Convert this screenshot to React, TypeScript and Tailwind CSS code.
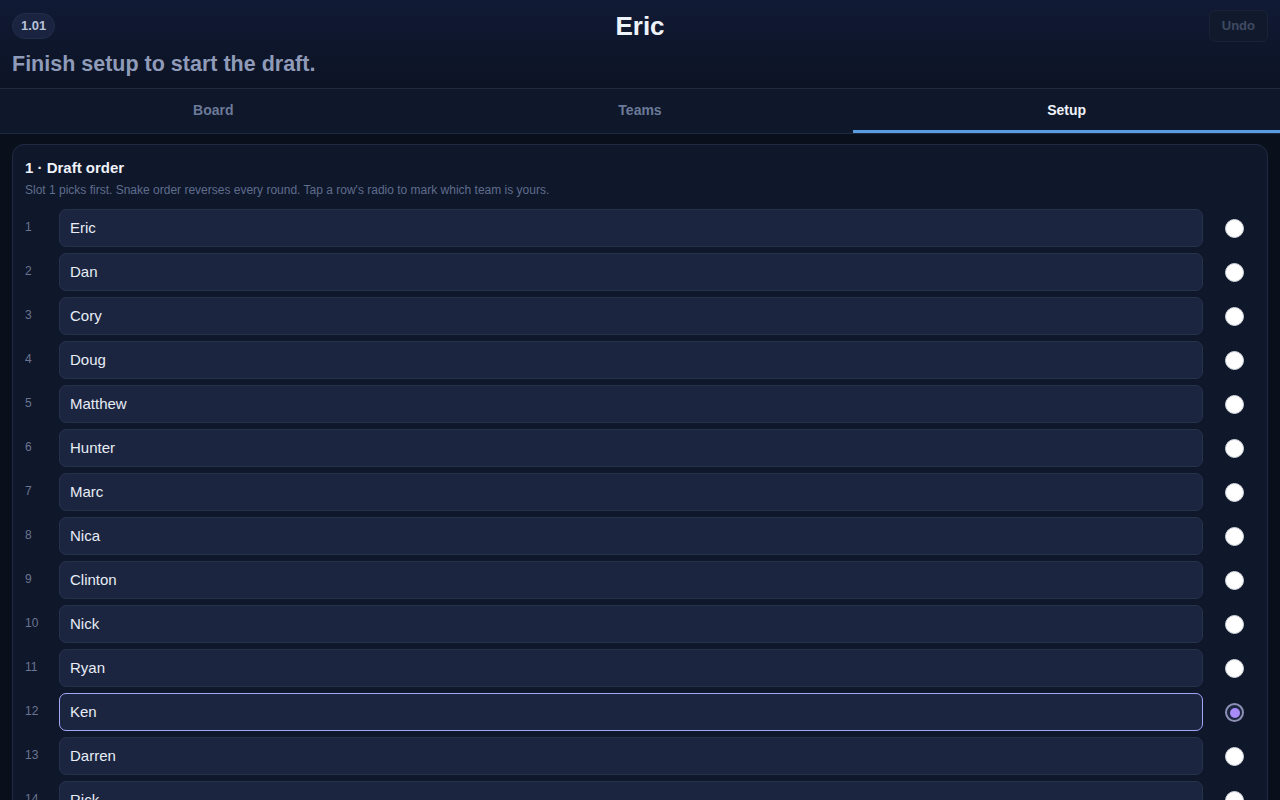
import { useState } from "react";

const teams = [
  "Eric",
  "Dan",
  "Cory",
  "Doug",
  "Matthew",
  "Hunter",
  "Marc",
  "Nica",
  "Clinton",
  "Nick",
  "Ryan",
  "Ken",
  "Darren",
  "Rick",
  "Steve",
  "Mike",
];

const tabs = ["Board", "Teams", "Setup"];

export default function App() {
  const [names, setNames] = useState(teams);
  const [mine, setMine] = useState(11);
  const [tab, setTab] = useState("Setup");

  return (
    <div
      className="min-h-screen bg-[#0a0f1c] text-[#e2e8f0]"
      style={{ fontFamily: '"Liberation Sans", Arial, sans-serif' }}
    >
      <header className="bg-gradient-to-b from-[#111a35] to-[#0c1324] px-3 pt-[10px] pb-[10px] border-b border-[#1f2a40]">
        <div className="relative flex h-8 items-center justify-between">
          <span className="rounded-full bg-[#1a2440] border border-[#222d48] px-2 py-[5px] text-[13px] font-bold leading-[14px] text-[#b8c2d8]">
            1.01
          </span>
          <h1 className="absolute left-1/2 -translate-x-1/2 text-[26px] font-bold text-[#eef2f9]">
            Eric
          </h1>
          <button
            disabled
            className="h-8 rounded-md border border-[#1a2236] bg-[#111a2d] px-3 text-[13px] font-bold text-[#3f4a63]"
          >
            Undo
          </button>
        </div>
        <p className="mt-2 text-[21.5px] font-bold leading-[28px] text-[#8f9bb8]">
          Finish setup to start the draft.
        </p>
      </header>

      <nav className="grid grid-cols-3 bg-[#0f172a] border-b border-[#1f2a40]">
        {tabs.map((t) => (
          <button
            key={t}
            onClick={() => setTab(t)}
            className={`h-[44px] border-b-[3px] pt-[1px] text-[14px] font-bold ${
              tab === t
                ? "border-[#5b9be0] text-[#eef2f9]"
                : "border-transparent text-[#6c7a99]"
            }`}
          >
            {t}
          </button>
        ))}
      </nav>

      <main className="px-3 pt-[10px]">
        <section className="rounded-xl border border-[#1f2a42] bg-[#0f172b] p-3">
          <h2 className="mt-[1px] text-[15px] font-bold leading-5 text-[#eef2f9]">
            1 · Draft order
          </h2>
          <p className="mt-1 text-[12px] leading-4 text-[#5f6d8c]">
            Slot 1 picks first. Snake order reverses every round. Tap a row's
            radio to mark which team is yours.
          </p>

          <div className="mt-[11px] flex flex-col gap-[6px]">
            {names.map((name, i) => (
              <div key={i} className="flex items-center">
                <span className="w-[34px] -mt-[2px] text-[12px] text-[#6a7591]">
                  {i + 1}
                </span>
                <input
                  value={name}
                  onChange={(e) => {
                    const next = [...names];
                    next[i] = e.target.value;
                    setNames(next);
                  }}
                  className={`h-[38px] flex-1 rounded-[7px] border bg-[#1b2540] px-[10px] pb-[1px] text-[15px] text-[#e8edf5] outline-none ${
                    mine === i ? "border-[#a5a6f6]" : "border-[#27314b]"
                  }`}
                />
                <div className="flex w-[52px] justify-end pr-[11px] pt-[1px]">
                  <button
                    onClick={() => setMine(i)}
                    className={`flex h-[19px] w-[19px] items-center justify-center rounded-full ${
                      mine === i
                        ? "border-2 border-[#8e8fb4] bg-[#1b2540]"
                        : "bg-white border border-[#d0d4dc]"
                    }`}
                  >
                    {mine === i && (
                      <span className="h-[10px] w-[10px] rounded-full bg-[#a88bf8]" />
                    )}
                  </button>
                </div>
              </div>
            ))}
          </div>
        </section>
      </main>
    </div>
  );
}
